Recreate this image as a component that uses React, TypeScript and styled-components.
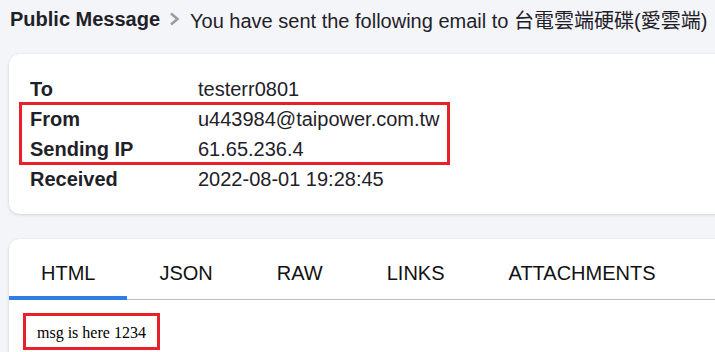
import React from "react";
import styled, { createGlobalStyle } from "styled-components";

const Global = createGlobalStyle`
  html, body { margin: 0; padding: 0; background: #f4f5f9; }
  body { font-family: "Liberation Sans", Arial, "Noto Sans CJK TC", sans-serif; color: #1f2129; overflow: hidden; }
  #root { width: 715px; height: 352px; overflow: hidden; }
`;

const Page = styled.div`
  display: flex;
  flex-direction: column;
  padding: 0 0 0 9px;
  width: 760px;
`;

const Breadcrumb = styled.div`
  display: flex;
  align-items: center;
  height: 38px;
  padding-left: 1px;
  font-size: 20px;
  white-space: nowrap;
`;

const Crumb = styled.span<{ $strong?: boolean }>`
  font-weight: ${(p) => (p.$strong ? 700 : 400)};
  color: #1f2129;
`;

const Chevron = styled.svg`
  width: 11px;
  height: 14px;
  margin: 0 10px 0 9px;
  flex: none;
`;

const Card = styled.div<{ $top: number }>`
  background: #fff;
  border-radius: 10px;
  margin-top: ${(p) => p.$top}px;
  box-shadow: 0 1px 3px rgba(0, 0, 0, 0.14), 0 0 1px rgba(0, 0, 0, 0.08);
`;

const InfoList = styled.div`
  display: flex;
  flex-direction: column;
  padding: 20px 0 20px 21px;
`;

const Group = styled.div<{ $marked?: boolean }>`
  position: relative;
  display: flex;
  flex-direction: column;
  &::before {
    content: "";
    display: ${(p) => (p.$marked ? "block" : "none")};
    position: absolute;
    left: -11px;
    top: -2px;
    width: 431px;
    height: 63px;
    border: 3px solid #e8202a;
    box-sizing: border-box;
    pointer-events: none;
  }
`;

const Row = styled.div`
  display: grid;
  grid-template-columns: 168px auto;
  height: 30px;
  align-items: center;
  font-size: 20px;
  white-space: nowrap;
`;

const Label = styled.span`
  font-weight: 700;
`;

const Value = styled.span`
  font-weight: 400;
`;

const Tabs = styled.div`
  display: flex;
  border-bottom: 1px solid #b3c0c9;
`;

const Tab = styled.div<{ $active?: boolean }>`
  height: 61px;
  box-sizing: border-box;
  padding: 23px 32px 0;
  font-size: 20px;
  line-height: 22px;
  color: #111;
  white-space: nowrap;
  border-bottom: 4px solid ${(p) => (p.$active ? "#2d7ee6" : "transparent")};
  margin-bottom: -1px;
`;

const Content = styled.div`
  padding: 13px 0 20px 14px;
`;

const Message = styled.div`
  display: inline-block;
  border: 3px solid #e8202a;
  padding: 8px 11px 5px 11px;
  font-family: "Liberation Serif", "Times New Roman", serif;
  font-size: 16px;
  line-height: 18px;
  color: #000;
`;

const rows1 = [{ k: "To", v: "testerr0801" }];
const rows2 = [
  { k: "From", v: "u443984@taipower.com.tw" },
  { k: "Sending IP", v: "61.65.236.4" },
];
const rows3 = [{ k: "Received", v: "2022-08-01 19:28:45" }];

const tabs = ["HTML", "JSON", "RAW", "LINKS", "ATTACHMENTS"];

export default function App() {
  const renderRows = (rs: { k: string; v: string }[]) =>
    rs.map((r) => (
      <Row key={r.k}>
        <Label>{r.k}</Label>
        <Value>{r.v}</Value>
      </Row>
    ));
  return (
    <>
      <Global />
      <Page>
        <Breadcrumb>
          <Crumb $strong>Public Message</Crumb>
          <Chevron viewBox="0 0 11 14">
            <path d="M2 1.5 L8.5 7 L2 12.5" fill="none" stroke="#9a9ba3" strokeWidth="2.6" />
          </Chevron>
          <Crumb>You have sent the following email to 台電雲端硬碟(愛雲端)</Crumb>
        </Breadcrumb>
        <Card $top={16}>
          <InfoList>
            <Group>{renderRows(rows1)}</Group>
            <Group $marked>{renderRows(rows2)}</Group>
            <Group>{renderRows(rows3)}</Group>
          </InfoList>
        </Card>
        <Card $top={25}>
          <Tabs>
            {tabs.map((t, i) => (
              <Tab key={t} $active={i === 0}>
                {t}
              </Tab>
            ))}
          </Tabs>
          <Content>
            <Message>msg is here 1234</Message>
          </Content>
        </Card>
      </Page>
    </>
  );
}
